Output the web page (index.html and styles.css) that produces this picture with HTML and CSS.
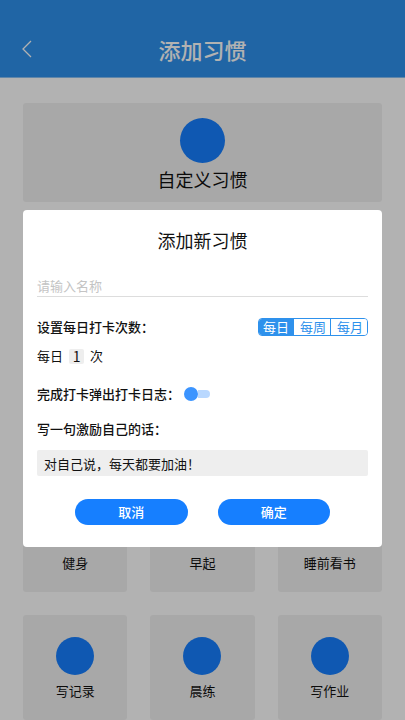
FILE: index.html
```html
<!DOCTYPE html>
<html lang="zh-CN">
<head>
    <meta charset="UTF-8">
    <meta name="viewport" content="width=device-width, initial-scale=1.0">
    <title>添加习惯</title>
    <link rel="stylesheet" href="styles.css">
</head>
<body>

    <div class="page">
        <header class="header">
            <a href="#" class="back" aria-label="返回">
                <svg width="10" height="18" viewBox="0 0 10 18" fill="none" stroke="currentColor" stroke-width="1.3">
                    <path d="M9 1L1 9l8 8"/>
                </svg>
            </a>
            <h1>添加习惯</h1>
        </header>

        <main class="content">
            <a href="#" class="card custom">
                <span class="dot"></span>
                <span>自定义习惯</span>
            </a>

            <!-- 推荐习惯 -->
            <div class="habits">
                <a href="#" class="card"><span class="dot"></span><span>健身</span></a>
                <a href="#" class="card"><span class="dot"></span><span>早起</span></a>
                <a href="#" class="card"><span class="dot"></span><span>睡前看书</span></a>
                <a href="#" class="card"><span class="dot"></span><span>写记录</span></a>
                <a href="#" class="card"><span class="dot"></span><span>晨练</span></a>
                <a href="#" class="card"><span class="dot"></span><span>写作业</span></a>
            </div>
        </main>
    </div>

    <!-- 弹窗 -->
    <div class="mask">
        <form class="dialog" role="dialog" aria-labelledby="dialogTitle">
            <h2 id="dialogTitle">添加新习惯</h2>

            <input type="text" class="name-input" placeholder="请输入名称" aria-label="名称">

            <div class="row between">
                <span class="label">设置每日打卡次数：</span>
                <div class="tabs">
                    <button type="button" class="active">每日</button>
                    <button type="button">每周</button>
                    <button type="button">每月</button>
                </div>
            </div>

            <div class="row count">
                <label for="times">每日</label>
                <input type="text" id="times" value="1">
                <span>次</span>
            </div>

            <div class="row log">
                <label class="label" for="showLog">完成打卡弹出打卡日志：</label>
                <input type="checkbox" id="showLog" class="switch">
            </div>

            <label class="label motto-label" for="motto">写一句激励自己的话：</label>
            <input type="text" id="motto" class="motto" value="对自己说，每天都要加油！">

            <div class="actions">
                <button type="button">取消</button>
                <button type="button">确定</button>
            </div>
        </form>
    </div>

    <script>
        // 切换打卡周期
        const tabs = document.querySelectorAll(".tabs button");
        tabs.forEach(tab => {
            tab.addEventListener("click", () => {
                tabs.forEach(t => t.classList.remove("active"));
                tab.classList.add("active");
                document.querySelector(".count label").innerText = tab.innerText;
            });
        });
    </script>

</body>
</html>
```
FILE: styles.css
```css
* {
    box-sizing: border-box;
}

body {
    margin: 0;
    font-family: "Noto Sans CJK SC", sans-serif;
    font-size: 13px;
    line-height: 20px;
    color: #111;
    background-color: #fff;
}

h1, h2 {
    margin: 0;
    font-weight: 400;
}

a {
    color: inherit;
    text-decoration: none;
}

input, button {
    font: inherit;
    color: inherit;
    border: none;
    margin: 0;
    padding: 0;
}

.page {
    min-height: 100vh;
    display: flex;
    flex-direction: column;
}

/* 顶部导航 */
.header {
    display: grid;
    grid-template-columns: 1fr auto 1fr;
    align-items: center;
    padding: 34px 22px 13px;
    background-color: #2e91ec;
    border-bottom: 1px solid #8ac0f2;
    color: #fff;
}

.back {
    display: flex;
}

.header h1 {
    font-size: 22px;
    line-height: 30px;
    font-weight: 500;
}

/* 习惯列表 */
.content {
    flex: 1;
    display: flex;
    flex-direction: column;
    justify-content: space-between;
    padding: 25px 23px 0;
}

.card {
    display: flex;
    flex-direction: column;
    align-items: center;
    gap: 6px;
    padding: 22px 0 19px;
    border-radius: 3px;
    background-color: #f1f1f1;
}

.dot {
    width: 38px;
    height: 38px;
    border-radius: 50%;
    background-color: #167fff;
}

.custom {
    gap: 3px;
    padding: 15px 0 10px;
    font-size: 18px;
    line-height: 26px;
}

.custom .dot {
    width: 45px;
    height: 45px;
}

.habits {
    display: grid;
    grid-template-columns: repeat(3, 1fr);
    gap: 23px;
}

/* 弹窗 */
.mask {
    position: fixed;
    inset: 0;
    padding: 210px 23px 0;
    background-color: rgba(0, 0, 0, 0.3);
}

.dialog {
    padding: 17px 14px 22px;
    border-radius: 4px;
    background-color: #fff;
}

.dialog h2 {
    font-size: 18px;
    line-height: 26px;
    text-align: center;
}

.name-input {
    display: block;
    width: 100%;
    height: 22px;
    margin-top: 22px;
    border-bottom: 1px solid #ddd;
    border-radius: 0;
    background: none;
    outline: none;
}

.name-input::placeholder {
    color: #c4c4c4;
    opacity: 1;
}

.label {
    font-weight: 500;
}

.row {
    display: flex;
    align-items: center;
}

.between {
    justify-content: space-between;
    margin-top: 20px;
}

.tabs {
    display: flex;
    border: 1px solid #2e91ec;
    border-radius: 4px;
    overflow: hidden;
}

.tabs button {
    padding: 0 4px;
    line-height: 16px;
    color: #2e91ec;
    background-color: #fff;
    cursor: pointer;
}

.tabs button + button {
    padding: 0 4px 0 6px;
    border-left: 1px solid #2e91ec;
}

.tabs .active {
    color: #fff;
    background-color: #2e91ec;
}

.count {
    gap: 6px;
    margin-top: 9px;
}

.count input {
    width: 15px;
    height: 15px;
    border-radius: 2px;
    background-color: #eee;
    font-size: 14px;
    text-align: center;
}

.log {
    gap: 4px;
    margin-top: 18px;
}

/* 开关 */
.switch {
    appearance: none;
    display: flex;
    align-items: center;
    width: 26px;
    height: 14px;
    cursor: pointer;
}

.switch::before {
    content: "";
    width: 14px;
    height: 14px;
    border-radius: 50%;
    background-color: #3b94ff;
}

.switch::after {
    content: "";
    width: 12px;
    height: 8px;
    border-radius: 0 4px 4px 0;
    background-color: #b9d8ff;
}

.switch:checked {
    flex-direction: row-reverse;
}

.switch:checked::after {
    border-radius: 4px 0 0 4px;
}

.motto-label {
    display: block;
    margin-top: 15px;
}

.motto {
    display: block;
    width: 100%;
    height: 26px;
    margin-top: 11px;
    padding: 0 7px;
    border-radius: 2px;
    background-color: #eee;
}

.actions {
    display: flex;
    justify-content: center;
    gap: 30px;
    margin-top: 23px;
}

.actions button {
    width: 34%;
    height: 26px;
    border-radius: 13px;
    background-color: #167fff;
    color: #fff;
    font-weight: 500;
    cursor: pointer;
}
```
